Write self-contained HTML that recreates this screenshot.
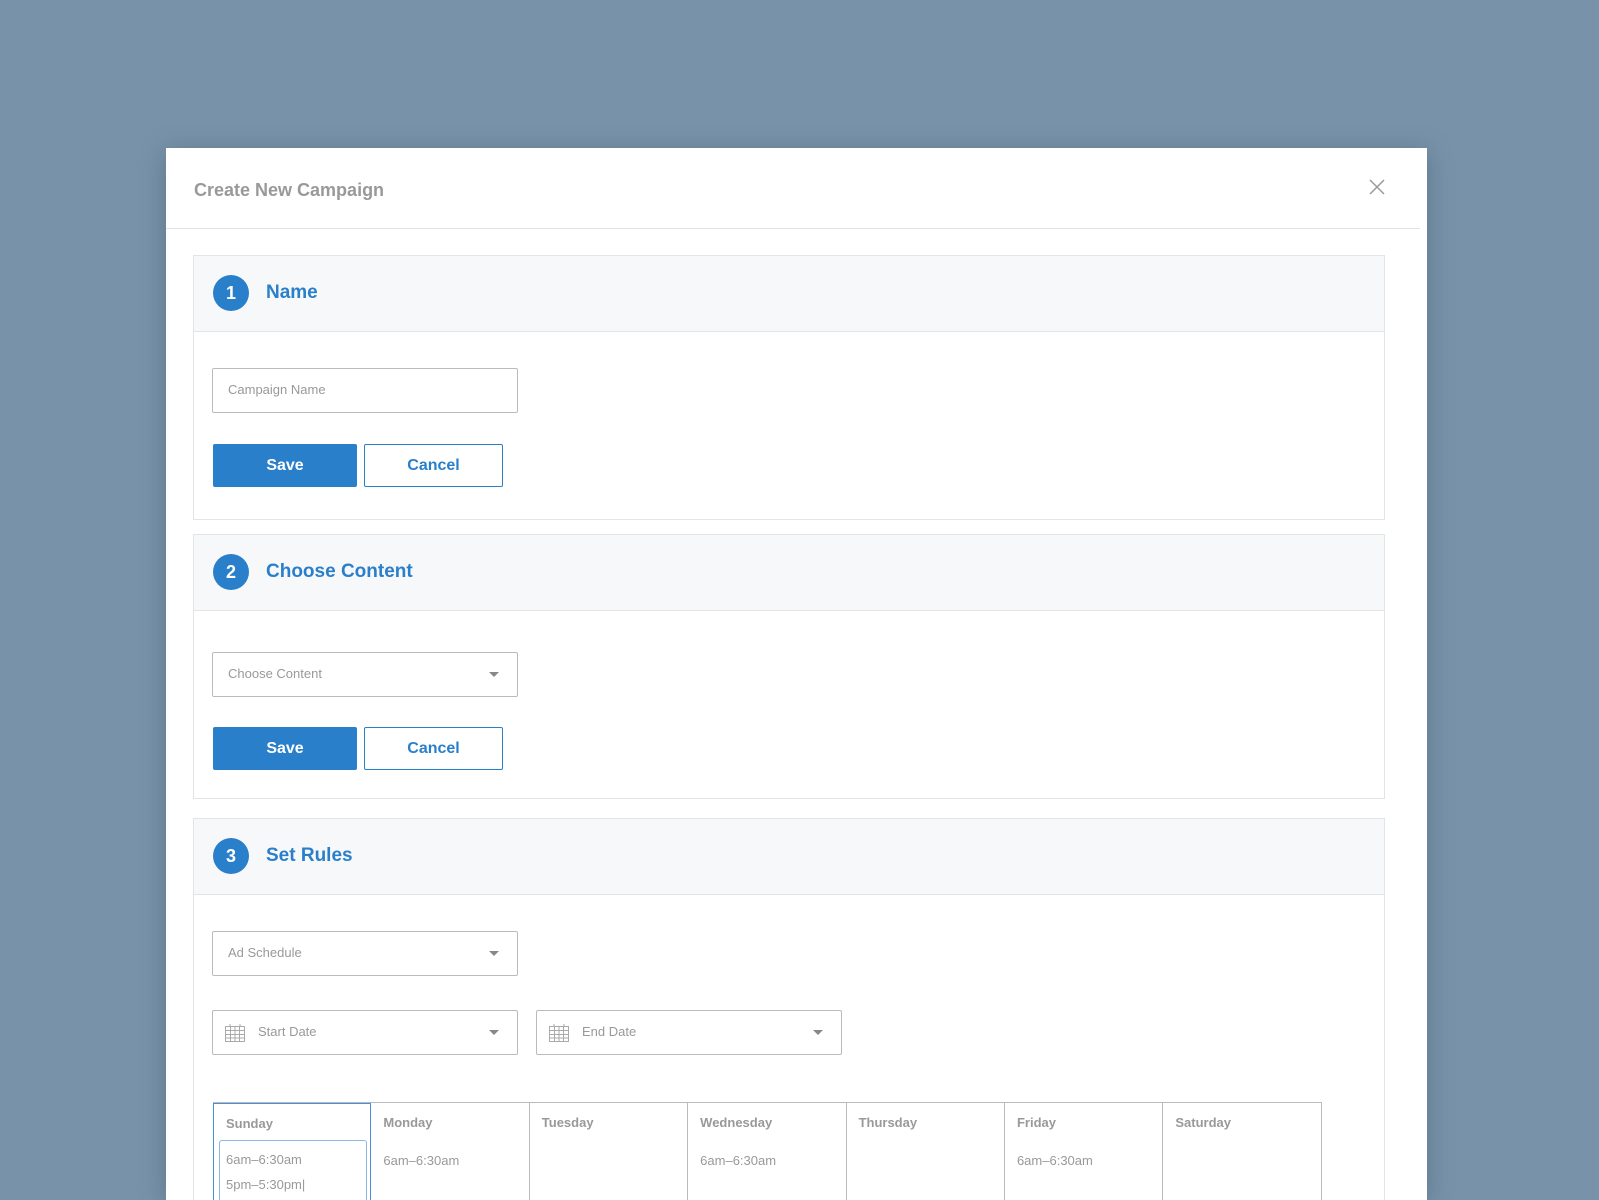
<!DOCTYPE html>
<html style="width:1599px;height:1200px;overflow:hidden"><head><style>
*{box-sizing:border-box;margin:0;padding:0}
body{width:1599px;height:1200px;overflow:hidden;background:#7893a9;font-family:"Liberation Sans",Arial,sans-serif;position:relative}
.modal{position:absolute;left:166px;top:148px;width:1261px;height:1052px;background:#fff;box-shadow:0 4px 24px rgba(40,60,80,.35);overflow:hidden}
.title{position:absolute;left:28px;top:32px;font-size:18px;font-weight:bold;color:#999}
.hdiv{position:absolute;left:0;top:80px;width:1254px;height:1px;background:#e3e3e3}
.close{position:absolute;left:1203px;top:31px}
.sec{position:absolute;left:27px;width:1192px;border:1px solid #e2e4e6;background:#fff;overflow:hidden}
.sh{height:76px;background:#f7f8fa;border-bottom:1px solid #e2e4e6;position:relative}
.circ{position:absolute;left:19px;top:19px;width:36px;height:36px;border-radius:50%;background:#2a7fcb;color:#fff;font-weight:bold;font-size:18px;text-align:center;line-height:36px}
.st{position:absolute;left:72px;top:26px;font-size:19px;font-weight:bold;color:#2a7fcb}
.inp{position:absolute;width:306px;height:45px;border:1.5px solid #bbb;border-radius:2px;font-size:13px;color:#999;padding-left:15px;line-height:42px}
.arr{position:absolute;right:18px;top:19px;width:0;height:0;border-left:5px solid transparent;border-right:5px solid transparent;border-top:5px solid #888}
.btn{position:absolute;height:43px;font-size:16px;font-weight:bold;text-align:center;line-height:41px;border-radius:2px}
.save{width:144px;background:#2a7fcb;color:#fff;border:1px solid #2a7fcb}
.cancel{width:139px;background:#fff;color:#2a7fcb;border:1.5px solid #2a7fcb}
.cal{position:absolute;left:19px;top:283px;display:flex;border-top:1.5px solid #bbb}
.col{width:158.4px;height:98px;border-right:1.5px solid #bbb;position:relative;font-size:13px;color:#999;overflow:hidden}
.col:first-child{border-left:1.5px solid #bbb}
.col b{position:absolute;left:12px;top:12px;color:#999}
.col span{position:absolute;left:12px;top:50px}
.ico{position:absolute;left:12px;top:13px}
</style></head><body>
<div class="modal">
<div class="title">Create New Campaign</div>
<svg class="close" width="16" height="16" viewBox="0 0 16 16"><path d="M1 1L15 15M15 1L1 15" stroke="#999" stroke-width="1.5"/></svg>
<div class="hdiv"></div>

<div class="sec" style="top:107px;height:265px">
<div class="sh"><div class="circ">1</div><div class="st">Name</div></div>
<div class="inp" style="left:18px;top:112px">Campaign Name</div>
<div class="btn save" style="left:19px;top:188px">Save</div>
<div class="btn cancel" style="left:170px;top:188px">Cancel</div>
</div>

<div class="sec" style="top:386px;height:265px">
<div class="sh"><div class="circ">2</div><div class="st">Choose Content</div></div>
<div class="inp" style="left:18px;top:117px">Choose Content<div class="arr"></div></div>
<div class="btn save" style="left:19px;top:192px">Save</div>
<div class="btn cancel" style="left:170px;top:192px">Cancel</div>
</div>

<div class="sec" style="top:670px;height:382px;border-bottom:none">
<div class="sh"><div class="circ">3</div><div class="st">Set Rules</div></div>
<div class="inp" style="left:18px;top:112px">Ad Schedule<div class="arr"></div></div>
<div class="inp" style="left:18px;top:191px;padding-left:45px"><svg class="ico" width="20" height="18" viewBox="0 0 20 18"><g stroke="#aaa" fill="none" stroke-width="1"><rect x="0.5" y="2.5" width="19" height="15"/><path d="M0.5 6.5H19.5M0.5 10.5H19.5M0.5 14H19.5M5.5 2.5V17.5M10 2.5V17.5M14.5 2.5V17.5M5 0V3M15 0V3"/></g></svg>Start Date<div class="arr"></div></div>
<div class="inp" style="left:342px;top:191px;padding-left:45px"><svg class="ico" width="20" height="18" viewBox="0 0 20 18"><g stroke="#aaa" fill="none" stroke-width="1"><rect x="0.5" y="2.5" width="19" height="15"/><path d="M0.5 6.5H19.5M0.5 10.5H19.5M0.5 14H19.5M5.5 2.5V17.5M10 2.5V17.5M14.5 2.5V17.5M5 0V3M15 0V3"/></g></svg>End Date<div class="arr"></div></div>
<div class="cal">
<div class="col" style="border:1.5px solid #4a90d9;border-bottom:none"><b>Sunday</b><div style="position:absolute;left:5px;top:36px;width:148px;height:80px;border:1px solid #8bb8e6;border-radius:3px"></div><span style="left:12px;top:48px">6am–6:30am</span><span style="left:12px;top:73px">5pm–5:30pm|</span></div>
<div class="col"><b>Monday</b><span>6am–6:30am</span></div>
<div class="col"><b>Tuesday</b></div>
<div class="col"><b>Wednesday</b><span>6am–6:30am</span></div>
<div class="col"><b>Thursday</b></div>
<div class="col"><b>Friday</b><span>6am–6:30am</span></div>
<div class="col"><b>Saturday</b></div>
</div>
</div>
</div>
</body></html>
